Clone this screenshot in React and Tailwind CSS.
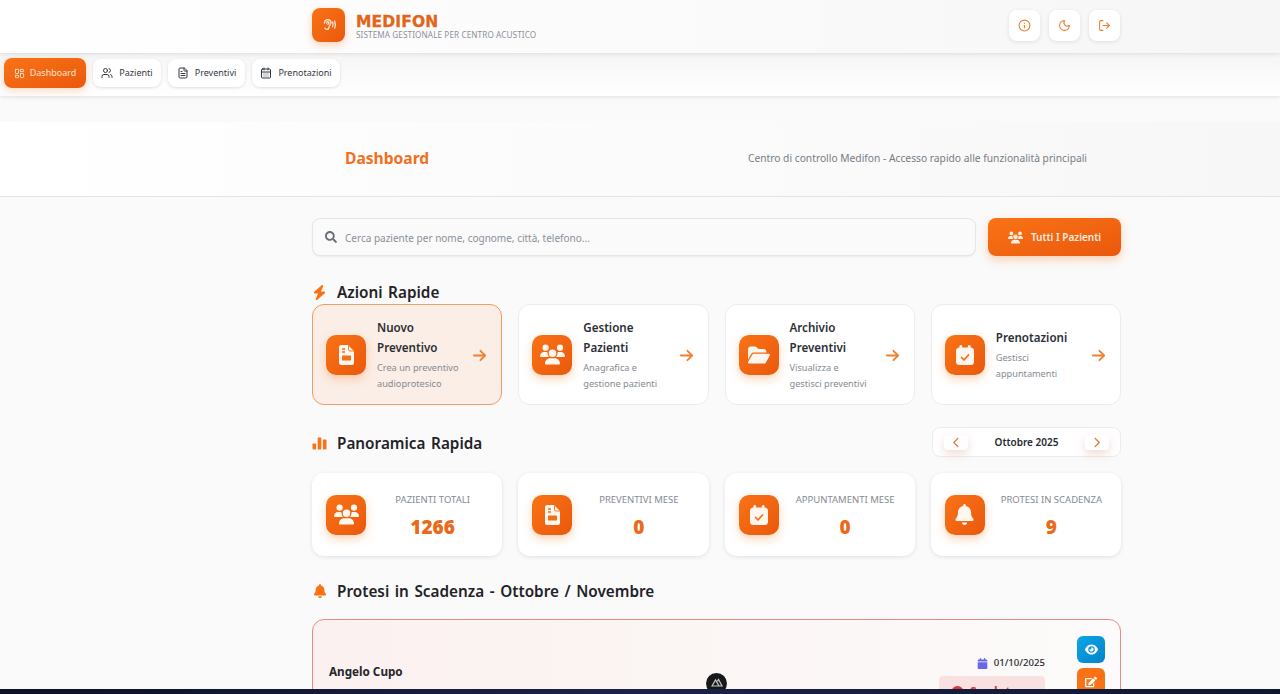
import { Info, Moon, LogOut, LayoutDashboard, Users, FileText, CalendarDays } from 'lucide-react';
import { FaSearch, FaEdit } from 'react-icons/fa';
import { FaBolt, FaUsers, FaFolderOpen, FaArrowRight, FaBell, FaChevronLeft, FaChevronRight, FaEye, FaCalendar } from 'react-icons/fa6';

const navItems = [
    { label: 'Pazienti', icon: Users, width: 'w-[68px]' },
    { label: 'Preventivi', icon: FileText, width: 'w-[77px]' },
    { label: 'Prenotazioni', icon: CalendarDays, width: 'w-[88px]' },
];

const FileIcon = ({ size }) => (
    <svg width={size * 0.75} height={size} viewBox="0 0 15 20">
        <path d="M2.500 0H9l6 6v11.500a2.500 2.500 0 0 1-2.500 2.500h-10A2.500 2.500 0 0 1 0 17.500v-15A2.500 2.500 0 0 1 2.500 0Z" fill="currentColor" />
        <path d="M9.500 0.500v4a1.500 1.500 0 0 0 1.500 1.500h4" fill="none" stroke="#f2701a" strokeWidth="0.9" />
        <path d="M3 4h3M3 7h3" stroke="#f2701a" strokeWidth="1.300" />
        <rect x="3" y="10.500" width="9" height="5" rx="0.5" fill="#f2701a" />
    </svg>
);

const CalendarCheckIcon = ({ size }) => (
    <svg width={size * 0.9} height={size} viewBox="0 0 18 20">
        <rect x="0" y="2.500" width="18" height="17.500" rx="3.500" fill="currentColor" />
        <rect x="3.500" y="0" width="2.600" height="5" rx="1.300" fill="currentColor" />
        <rect x="11.900" y="0" width="2.600" height="5" rx="1.300" fill="currentColor" />
        <path d="M5.500 12.500 8 15l4.500-5" fill="none" stroke="#f2701a" strokeWidth="1.700" strokeLinecap="round" strokeLinejoin="round" />
    </svg>
);

const actions = [
    { title: ['Nuovo', 'Preventivo'], desc: ['Crea un preventivo', 'audioprotesico'], icon: FileIcon, size: 20, active: true },
    { title: ['Gestione', 'Pazienti'], desc: ['Anagrafica e', 'gestione pazienti'], icon: FaUsers, size: 25 },
    { title: ['Archivio', 'Preventivi'], desc: ['Visualizza e', 'gestisci preventivi'], icon: FaFolderOpen, size: 22 },
    { title: ['Prenotazioni'], desc: ['Gestisci', 'appuntamenti'], icon: CalendarCheckIcon, size: 20 },
];

const stats = [
    { label: 'PAZIENTI TOTALI', value: '1266', icon: FaUsers, size: 25 },
    { label: 'PREVENTIVI MESE', value: '0', icon: FileIcon, size: 20 },
    { label: 'APPUNTAMENTI MESE', value: '0', icon: CalendarCheckIcon, size: 20 },
    { label: 'PROTESI IN SCADENZA', value: '9', icon: FaBell, size: 21 },
];

const IconBox = ({ icon: Icon, size }) => (
    <div className="w-10 h-10 shrink-0 rounded-[10px] bg-gradient-to-br from-[#f97316] to-[#ea580c] shadow-[0_4px_10px_rgba(249,115,22,0.3)] flex items-center justify-center text-[#fff6ef]">
        <Icon size={size} />
    </div>
);

const BarsIcon = () => (
    <svg width="15" height="13" viewBox="0 0 15 13" className="text-[#f97316]" fill="currentColor">
        <rect x="0.5" y="6.5" width="3.6" height="6" rx="0.8" />
        <rect x="5.7" y="0.5" width="3.6" height="12" rx="0.8" />
        <rect x="10.9" y="2.5" width="3.6" height="10" rx="0.8" />
    </svg>
);

const EarIcon = () => (
    <svg width="16" height="16" viewBox="0 0 16 16" fill="none" stroke="#fbe6d6" strokeWidth="1.3" strokeLinecap="round">
        <path d="M3.500 6.200C3.500 3.900 5 2.600 6.800 2.600c1.900 0 3.200 1.400 3.200 3.200 0 1.900-1.700 2.400-1.900 4-.2 1.500-1 2.600-2.300 2.600-1 0-1.700-.6-2-1.400" />
        <path d="M5.600 6c0-.8.5-1.400 1.200-1.400.8 0 1.200.6 1.200 1.200 0 .7-.8 1-1.100 1.600" />
        <path d="M11.600 5.200c.6 1.500.6 3 0 4.600" />
        <path d="M13.600 4c1 2.400 1 4.700 0 7.200" />
    </svg>
);

const SectionTitle = ({ icon, children }) => (
    <div className="flex items-center">
        <span className="w-[15px] flex justify-center text-[#f97316]">{icon}</span>
        <h2 className="ml-[10px] text-[15.3px] leading-[22px] font-semibold [word-spacing:1.6px] text-[#1f2328]">{children}</h2>
    </div>
);

export default function App() {
    return (
        <div className="h-[694px] overflow-hidden relative bg-[#fafafa] text-[#1f2328] font-['Noto_Sans',sans-serif]">
            <header className="h-[53px] pb-[3px] bg-gradient-to-r from-white to-[#f6f6f6] shadow-[0_1px_4px_rgba(0,0,0,0.1)] relative z-10">
                <div className="ml-[312px] w-[809px] h-full flex items-center justify-between">
                    <div className="flex items-center">
                        <div className="w-[33px] h-[34px] rounded-lg bg-gradient-to-br from-[#f97316] to-[#ea580c] shadow-[0_3px_8px_rgba(249,115,22,0.3)] flex items-center justify-center">
                            <EarIcon />
                        </div>
                        <div className="ml-[11px] pt-[4px]">
                            <div className="text-[15.5px] leading-[15px] font-bold tracking-[0.01em] [-webkit-text-stroke:0.3px_#e2661a] text-[#e2661a] font-['DejaVu_Sans',sans-serif]">MEDIFON</div>
                            <div className="-mt-[1px] text-[8.2px] leading-[11px] tracking-[0.01em] text-[#8b9099]">SISTEMA GESTIONALE PER CENTRO ACUSTICO</div>
                        </div>
                    </div>
                    <div className="flex gap-[9px] mr-[1px]">
                        {[Info, Moon, LogOut].map((Icon, i) => (
                            <button key={i} className="w-[31px] h-[31px] rounded-lg bg-white shadow-[0_1px_4px_rgba(0,0,0,0.1)] flex items-center justify-center text-[#ea7f33]">
                                <Icon size={13} />
                            </button>
                        ))}
                    </div>
                </div>
            </header>

            <nav className="h-[43px] pb-[3px] bg-gradient-to-b from-[#f5f5f5] to-white shadow-[0_1px_4px_rgba(0,0,0,0.1)] flex items-center pl-1 gap-[7px] relative">
                <a className="w-[82px] h-[30px] rounded-lg bg-gradient-to-br from-[#f97316] to-[#ea580c] shadow-[0_3px_8px_rgba(249,115,22,0.25)] flex items-center justify-center gap-[5px] text-[9px] text-[#fde3cf]">
                    <LayoutDashboard size={11} />
                    Dashboard
                </a>
                {navItems.map(({ label, icon: Icon, width }) => (
                    <a key={label} className={`${width} h-[28px] rounded-lg bg-white shadow-[0_1px_3px_rgba(0,0,0,0.12)] flex items-center justify-center gap-[6px] text-[9px] text-[#33373d]`}>
                        <Icon size={12} />
                        {label}
                    </a>
                ))}
            </nav>

            <section className="mt-[26px] h-[75px] bg-gradient-to-r from-white to-[#f7f7f7] border-b border-[#e5e5e5]">
                <div className="ml-[345px] w-[742px] h-full flex items-center justify-between">
                    <h1 className="text-[15.6px] font-bold text-[#f07020]">Dashboard</h1>
                    <p className="text-[10.25px] text-[#777c84]">Centro di controllo Medifon - Accesso rapido alle funzionalità principali</p>
                </div>
            </section>

            <main className="ml-[312px] w-[809px] pt-[21px]">
                <div className="flex justify-between">
                    <div className="w-[664px] h-[38px] rounded-lg bg-[#fafafa] border border-[#e6e6e6] shadow-[0_1px_2px_rgba(0,0,0,0.06)] flex items-center pl-3">
                        <FaSearch size={12} className="text-[#6b7078]" />
                        <span className="ml-[8px] pt-[2px] text-[10px] text-[#8b9099]">Cerca paziente per nome, cognome, città, telefono...</span>
                    </div>
                    <button className="w-[133px] h-[38px] pt-[1px] rounded-lg bg-gradient-to-br from-[#f97316] to-[#ea580c] shadow-[0_4px_10px_rgba(249,115,22,0.3)] flex items-center justify-center gap-2 text-[10px] font-semibold text-[#fdeee2]">
                        <FaUsers size={15} />
                        Tutti I Pazienti
                    </button>
                </div>

                <div className="mt-[25px]">
                    <SectionTitle icon={<FaBolt size={15} />}>Azioni Rapide</SectionTitle>
                </div>
                <div className="mt-[1px] grid grid-cols-4 gap-4">
                    {actions.map(({ title, desc, icon, size, active }) => (
                        <div key={title[0]} className={`h-[101px] rounded-xl border flex items-center pl-[13px] pr-[14px] ${active ? 'bg-[#fbeee6] border-[#ee9d63]' : 'bg-white border-[#ececec]'}`}>
                            <IconBox icon={icon} size={size} />
                            <div className="ml-[11px] flex-1">
                                {title.map((t) => (
                                    <div key={t} className="text-[11.6px] leading-[20px] font-semibold text-[#2b2f35]">{t}</div>
                                ))}
                                <div className="mt-[2px]">
                                    {desc.map((d) => (
                                        <div key={d} className="text-[9.2px] leading-[16px] text-[#858a92]">{d}</div>
                                    ))}
                                </div>
                            </div>
                            <FaArrowRight size={15} className="mt-[1px] text-[#f0802f]" />
                        </div>
                    ))}
                </div>

                <div className="mt-[22px] h-[30px] flex items-center justify-between">
                    <div className="pt-[2px]">
                        <SectionTitle icon={<BarsIcon />}>Panoramica Rapida</SectionTitle>
                    </div>
                    <div className="w-[189px] h-[30px] rounded-lg bg-white border border-[#ececec] flex items-center justify-between px-[11px]">
                        <button className="w-6 h-[15px] rounded bg-white shadow-[0_4px_8px_rgba(200,120,90,0.25)] flex items-center justify-center text-[#e8773a]">
                            <FaChevronLeft size={11} />
                        </button>
                        <span className="text-[10px] font-semibold text-[#26292e]">Ottobre 2025</span>
                        <button className="w-6 h-[15px] rounded bg-white shadow-[0_4px_8px_rgba(200,120,90,0.25)] flex items-center justify-center text-[#e8773a]">
                            <FaChevronRight size={11} />
                        </button>
                    </div>
                </div>

                <div className="mt-4 grid grid-cols-4 gap-4">
                    {stats.map(({ label, value, icon, size }) => (
                        <div key={label} className="h-[83px] rounded-xl bg-white shadow-[0_1px_4px_rgba(0,0,0,0.1)] flex items-center px-[14px]">
                            <IconBox icon={icon} size={size} />
                            <div className="ml-[11px] pt-[2px] flex-1 text-center">
                                <div className="text-[9.5px] leading-[14px] text-[#858a92] whitespace-nowrap">{label}</div>
                                <div className="mt-[8px] text-[19px] leading-[24px] font-black text-[#ea6a1c]">{value}</div>
                            </div>
                        </div>
                    ))}
                </div>

                <div className="mt-6">
                    <SectionTitle icon={<FaBell size={14} />}>Protesi in Scadenza - Ottobre / Novembre</SectionTitle>
                </div>

                <div className="mt-[17px] h-[120px] rounded-xl border border-[#e98b84] bg-gradient-to-r from-[#fbf1f0] to-[#fcfafa] pl-4 pr-[15px] pt-4 flex justify-between">
                    <div className="pt-[27px] text-[11.7px] leading-[16px] font-bold text-[#23262b]">Angelo Cupo</div>
                    <div className="flex gap-[32px]">
                        <div className="pt-[20px] flex flex-col items-end">
                            <div className="flex items-center gap-[6px] text-[9.6px] leading-[14px] font-medium text-[#26292e]">
                                <FaCalendar size={11} className="text-[#6a66e8]" />
                                01/10/2025
                            </div>
                            <div className="mt-[6px] w-[106px] h-[26px] rounded bg-[#f9e1e1] flex items-start pl-3 pt-[7px] text-[12px] font-bold text-[#d83a3a]">
                                <span className="w-[13px] h-[13px] rounded-full bg-[#d83a3a] mr-[6px] mt-[3px]" />
                                Scaduta
                            </div>
                        </div>
                        <div className="flex flex-col gap-[5px]">
                            <button className="w-[28px] h-[27px] rounded-md bg-gradient-to-br from-[#0ea5e9] to-[#0284c7] flex items-center justify-center text-white"><FaEye size={13} /></button>
                            <button className="w-[28px] h-[27px] rounded-md bg-[#f97316] flex items-center justify-center text-white"><FaEdit size={12} /></button>
                        </div>
                    </div>
                </div>
            </main>

            {/* badge and window strip over the bottom of the page */}
            <div className="absolute left-[706px] top-[673px] w-[21px] h-[21px] rounded-full bg-[#17181a] flex items-start justify-center pt-[5px]">
                <svg width="12" height="9" viewBox="0 0 12 9" fill="none" stroke="#c9c9c9" strokeWidth="1.2">
                    <path d="M1 8 4.500 2 8 8H1Z" />
                    <path d="M6.200 3.500 7.500 1.500 11 8H8.500" />
                </svg>
            </div>
            <div className="absolute left-0 right-0 bottom-0 h-[5px] bg-gradient-to-r from-[#0d1126] via-[#1a2248] to-[#10162e]" />
        </div>
    );
}
